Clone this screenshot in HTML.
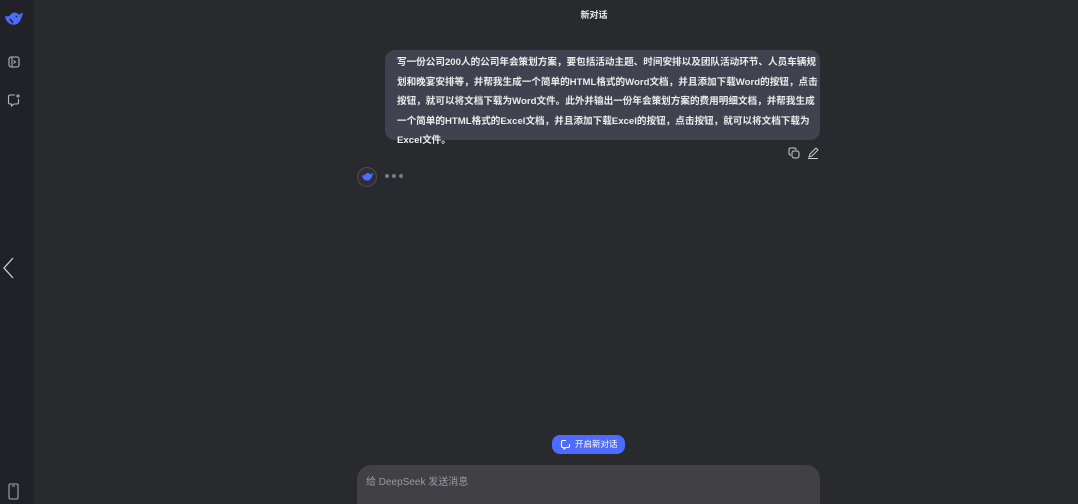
<!DOCTYPE html>
<html><head><meta charset="utf-8"><style>
*{margin:0;padding:0;box-sizing:border-box}
html,body{width:1078px;height:504px;overflow:hidden}
body{background:#292a2d;position:relative;font-family:"Liberation Sans","Noto Sans CJK SC",sans-serif;color:#f0f0f0}
.side{position:absolute;left:0;top:0;width:34px;height:504px;background:#202227}
.title{position:absolute;top:8px;left:0;width:1188px;text-align:center;font-size:9px;font-weight:bold;color:#eee}
.bubble{position:absolute;left:385px;top:50px;width:435px;height:90px;background:#41424f;border-radius:10px;padding:3px 12px;font-size:9.6px;font-weight:bold;line-height:19.5px;color:#ececec;white-space:nowrap}
.btn{position:absolute;left:552px;top:435px;width:73px;height:19px;background:#4d6bfe;border-radius:8px;font-size:8.5px;color:#fff;line-height:19px;padding-left:23px}
.input{position:absolute;left:357px;top:465px;width:463px;height:39px;background:#404045;border-radius:14px 14px 0 0;padding:8px 9px;font-size:10px;color:#9a9aa0}
</style></head><body>
<div class="side">
<svg style="position:absolute;left:4px;top:11px" width="20" height="16" viewBox="0 0 20 16"><path d="M1 5 C2 13 9 15 13 13 C16 11 17 8 18 5 C19 3 19 1 17 2 C16 4 15 4 14 3 C12 1 9 1 7 3 C6 5 4 6 1 5Z" fill="#4d6bfe"/><path d="M6 8 L9 12 M12 5 l1 1" stroke="#202227" stroke-width="1.5" fill="none"/></svg>
<svg style="position:absolute;left:8px;top:56px" width="12" height="12" viewBox="0 0 12 12"><rect x="1" y="1" width="10" height="10" rx="2" fill="none" stroke="#b8b8c0" stroke-width="1.1"/><path d="M4 1v10M5.5 4.5l2 1.5-2 1.5" stroke="#b8b8c0" fill="none" stroke-width="1"/></svg>
<svg style="position:absolute;left:7px;top:93px" width="14" height="14" viewBox="0 0 14 14"><path d="M8 2H3a1.5 1.5 0 0 0-1.5 1.5v6A1.5 1.5 0 0 0 3 11h1.5v2l2.5-2H10a1.5 1.5 0 0 0 1.5-1.5V6" fill="none" stroke="#b8b8c0" stroke-width="1.1"/><path d="M11 1v4M9 3h4" stroke="#b8b8c0" stroke-width="1"/></svg>
<svg style="position:absolute;left:2px;top:257px" width="12" height="22" viewBox="0 0 12 22"><path d="M11 1L2 11l9 10" fill="none" stroke="#d0d0d5" stroke-width="1.3"/></svg>
<svg style="position:absolute;left:8px;top:483px" width="11" height="17" viewBox="0 0 11 17"><rect x="1" y="1" width="9" height="15" rx="1.5" fill="none" stroke="#a8a8b0" stroke-width="1.1"/><path d="M4 3h3" stroke="#a8a8b0"/></svg>
</div>
<div class="title">新对话</div>
<div class="bubble">写一份公司200人的公司年会策划方案，要包括活动主题、时间安排以及团队活动环节、人员车辆规<br>划和晚宴安排等，并帮我生成一个简单的HTML格式的Word文档，并且添加下载Word的按钮，点击<br>按钮，就可以将文档下载为Word文件。此外并输出一份年会策划方案的费用明细文档，并帮我生成<br>一个简单的HTML格式的Excel文档，并且添加下载Excel的按钮，点击按钮，就可以将文档下载为<br>Excel文件。</div>
<svg style="position:absolute;left:788px;top:147px" width="12" height="12" viewBox="0 0 12 12"><rect x="4" y="4" width="7" height="7" rx="2" fill="none" stroke="#ccc"/><path d="M3 8H2.5A1.5 1.5 0 0 1 1 6.5v-4A1.5 1.5 0 0 1 2.5 1h4A1.5 1.5 0 0 1 8 2.5V3" fill="none" stroke="#ccc"/></svg>
<svg style="position:absolute;left:807px;top:147px" width="12" height="12" viewBox="0 0 12 12"><path d="M2 10l1-3 6-6 2 2-6 6z M1 11.5h10" fill="none" stroke="#ccc"/></svg>
<div style="position:absolute;left:357px;top:167px;width:20px;height:20px;border-radius:50%;border:1px solid #4a4b55;background:#2e2f36"></div>
<svg style="position:absolute;left:361px;top:172px" width="13" height="10" viewBox="0 0 20 16"><path d="M1 5 C2 13 9 15 13 13 C16 11 17 8 18 5 C19 3 19 1 17 2 C16 4 15 4 14 3 C12 1 9 1 7 3 C6 5 4 6 1 5Z" fill="#4d6bfe"/></svg>
<div style="position:absolute;left:385px;top:174px;width:4px;height:4px;border-radius:50%;background:#7a7b85"></div>
<div style="position:absolute;left:392px;top:174px;width:4px;height:4px;border-radius:50%;background:#7a7b85"></div>
<div style="position:absolute;left:399px;top:174px;width:4px;height:4px;border-radius:50%;background:#7a7b85"></div>
<div class="btn">开启新对话</div>
<svg style="position:absolute;left:560px;top:439px" width="11" height="11" viewBox="0 0 11 11"><path d="M6 1.5H3A1.5 1.5 0 0 0 1.5 3v4A1.5 1.5 0 0 0 3 8.5h1v1.5l2-1.5h2A1.5 1.5 0 0 0 9.5 7V5" fill="none" stroke="#fff" stroke-width="1.1"/></svg>
<div class="input">给 DeepSeek 发送消息</div>
</body></html>
